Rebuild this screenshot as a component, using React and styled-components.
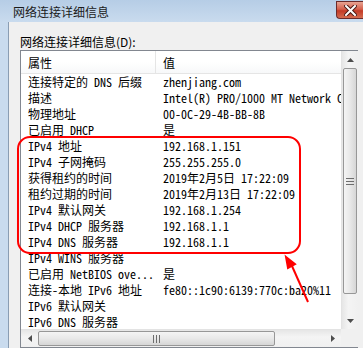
import React from "react";
import styled, { createGlobalStyle } from "styled-components";

const Global = createGlobalStyle`
  html, body {
    margin: 0;
    padding: 0;
    background: #f0f0f0;
  }
`;

const mono = `"Noto Sans Mono CJK SC", "Noto Sans CJK SC", "Liberation Mono", monospace`;

const Window = styled.div`
  position: relative;
  width: 363px;
  height: 348px;
  overflow: hidden;
  display: flex;
  flex-direction: column;
  background: #f0f0f0;
  font-family: ${mono};
  font-size: 12px;
  color: #000;
`;

const TitleBar = styled.div`
  height: 22px;
  flex: none;
  display: flex;
  align-items: flex-start;
  justify-content: space-between;
  background: linear-gradient(to bottom, #b6cde6, #c9dbee);
`;

const Title = styled.div`
  padding: 4px 0 0 13px;
  font-family: "Noto Sans CJK SC", sans-serif;
  font-size: 12px;
  line-height: 16px;
  color: #1b1b1b;
`;

const CloseButton = styled.div`
  width: 27px;
  height: 18px;
  margin-top: 1px;
  box-sizing: border-box;
  border: 1px solid #6b2b2b;
  border-right: none;
  border-radius: 0 0 0 4px;
  background: linear-gradient(to bottom, #e8a493 0%, #d5604c 45%, #c33a26 55%, #d46c50 100%);
  display: flex;
  align-items: center;
  justify-content: center;
`;

const Frame = styled.div`
  flex: 1;
  display: flex;
  min-height: 0;
`;

const SideFrame = styled.div`
  width: 8px;
  flex: none;
  background: #c9dbee;
  border-right: 1px solid #8a9db3;
`;

const Body = styled.div`
  flex: 1;
  padding: 12px 5px 0 11px;
  display: flex;
  flex-direction: column;
  min-width: 0;
`;

const Label = styled.div`
  height: 16px;
  line-height: 16px;
  font-family: "Noto Sans CJK SC", sans-serif;
  margin-bottom: 0;
`;

const ListBox = styled.div`
  margin-top: 0;
  width: 338px;
  height: 298px;
  box-sizing: border-box;
  border: 1px solid #828790;
  background: #fff;
  display: grid;
  grid-template-columns: 320px 17px;
  grid-template-rows: 1fr 18px;
`;

const Content = styled.div`
  overflow: hidden;
  position: relative;
`;

const HeaderRow = styled.div`
  display: flex;
  height: 23px;
  box-sizing: border-box;
  border-bottom: 1px solid #e5e5e5;
  background: linear-gradient(to bottom, #ffffff 50%, #f7f8f9);
`;

const HeaderCell = styled.div`
  width: ${(p) => p.$w}px;
  flex: none;
  box-sizing: border-box;
  padding-left: ${(p) => p.$pad}px;
  line-height: 23px;
  font-family: "Noto Sans CJK SC", sans-serif;
  border-right: ${(p) => (p.$divider ? "1px solid #e5e5e5" : "none")};
`;

const Row = styled.div`
  display: flex;
  height: 16px;
  line-height: 16px;
  white-space: nowrap;
`;

const Cell = styled.div`
  width: ${(p) => p.$w}px;
  flex: none;
  box-sizing: border-box;
  padding-left: ${(p) => p.$pad}px;
  overflow: ${(p) => (p.$clip ? "hidden" : "visible")};
`;

const VScroll = styled.div`
  display: flex;
  flex-direction: column;
  background: linear-gradient(to right, #e6e6e6, #f4f4f4 40%, #f0f0f0);
  border-left: 1px solid #e3e3e3;
`;

const HScroll = styled.div`
  display: flex;
  align-items: stretch;
  background: linear-gradient(to bottom, #e6e6e6, #f4f4f4 40%, #f0f0f0);
  border-top: 1px solid #e3e3e3;
`;

const ArrowBtn = styled.div`
  flex: none;
  width: ${(p) => (p.$horiz ? "17px" : "auto")};
  height: ${(p) => (p.$horiz ? "auto" : "17px")};
  display: flex;
  align-items: center;
  justify-content: center;
`;

const Thumb = styled.div`
  box-sizing: border-box;
  border: 1px solid #979797;
  border-radius: 2px;
  display: flex;
  align-items: center;
  justify-content: center;
  background: ${(p) =>
    p.$horiz
      ? "linear-gradient(to bottom, #f4f4f4, #e8e8e8 50%, #d6d6d6)"
      : "linear-gradient(to right, #f4f4f4, #e8e8e8 50%, #d6d6d6)"};
  margin: ${(p) => (p.$horiz ? "1px 0" : "0 1px")};
  ${(p) => (p.$horiz ? `width: ${p.$len}px;` : `height: ${p.$len}px;`)}
`;

const Spacer = styled.div`
  flex: 1;
`;

const Corner = styled.div`
  background: #f0f0f0;
`;

const Overlay = styled.svg`
  position: absolute;
  left: 0;
  top: 0;
  pointer-events: none;
`;

const rows = [
  ["连接特定的 DNS 后缀", "zhenjiang.com"],
  ["描述", "Intel(R) PRO/1000 MT Network Connection"],
  ["物理地址", "00-0C-29-4B-BB-8B"],
  ["已启用 DHCP", "是"],
  ["IPv4 地址", "192.168.1.151"],
  ["IPv4 子网掩码", "255.255.255.0"],
  ["获得租约的时间", "2019年2月5日 17:22:09"],
  ["租约过期的时间", "2019年2月13日 17:22:09"],
  ["IPv4 默认网关", "192.168.1.254"],
  ["IPv4 DHCP 服务器", "192.168.1.1"],
  ["IPv4 DNS 服务器", "192.168.1.1"],
  ["IPv4 WINS 服务器", ""],
  ["已启用 NetBIOS ove...", "是"],
  ["连接-本地 IPv6 地址", "fe80::1c90:6139:770c:ba20%11"],
  ["IPv6 默认网关", ""],
  ["IPv6 DNS 服务器", ""],
];

const Tri = ({ dir }) => {
  const pts = {
    up: "0,4 7,4 3.5,0",
    down: "0,0 7,0 3.5,4",
    left: "4,0 4,7 0,3.5",
    right: "0,0 0,7 4,3.5",
  }[dir];
  const w = dir === "up" || dir === "down" ? 7 : 4;
  const h = dir === "up" || dir === "down" ? 4 : 7;
  return (
    <svg width={w} height={h} viewBox={`0 0 ${w} ${h}`}>
      <polygon points={pts} fill="#4d4d4d" />
    </svg>
  );
};

const Grip = ({ horiz }) =>
  horiz ? (
    <svg width="7" height="8" viewBox="0 0 7 8">
      <rect x="0" y="0" width="1" height="8" fill="#6d6d6d" />
      <rect x="3" y="0" width="1" height="8" fill="#6d6d6d" />
      <rect x="6" y="0" width="1" height="8" fill="#6d6d6d" />
    </svg>
  ) : (
    <svg width="8" height="7" viewBox="0 0 8 7">
      <rect x="0" y="0" width="8" height="1" fill="#6d6d6d" />
      <rect x="0" y="3" width="8" height="1" fill="#6d6d6d" />
      <rect x="0" y="6" width="8" height="1" fill="#6d6d6d" />
    </svg>
  );

export default function App() {
  return (
    <Window>
      <Global />
      <TitleBar>
        <Title>网络连接详细信息</Title>
        <CloseButton>
          <svg width="13" height="11" viewBox="0 0 13 11">
            <path
              d="M2 1 L11 10 M11 1 L2 10"
              stroke="#4a1a14"
              strokeWidth="4"
              strokeLinecap="square"
            />
            <path
              d="M2 1 L11 10 M11 1 L2 10"
              stroke="#ffffff"
              strokeWidth="2"
              strokeLinecap="square"
            />
          </svg>
        </CloseButton>
      </TitleBar>
      <Frame>
        <SideFrame />
        <Body>
          <Label>网络连接详细信息(D):</Label>
          <ListBox>
            <Content>
              <HeaderRow>
                <HeaderCell $w={135} $pad={7} $divider>
                  属性
                </HeaderCell>
                <HeaderCell $w={200} $pad={7}>
                  值
                </HeaderCell>
              </HeaderRow>
              {rows.map(([k, v]) => (
                <Row key={k}>
                  <Cell $w={135} $pad={7} $clip>
                    {k}
                  </Cell>
                  <Cell $w={300} $pad={7}>
                    {v}
                  </Cell>
                </Row>
              ))}
            </Content>
            <VScroll>
              <ArrowBtn>
                <Tri dir="up" />
              </ArrowBtn>
              <Thumb $len={226}>
                <Grip />
              </Thumb>
              <Spacer />
              <ArrowBtn>
                <Tri dir="down" />
              </ArrowBtn>
            </VScroll>
            <HScroll>
              <ArrowBtn $horiz>
                <Tri dir="left" />
              </ArrowBtn>
              <Thumb $horiz $len={237}>
                <Grip horiz />
              </Thumb>
              <Spacer />
              <ArrowBtn $horiz>
                <Tri dir="right" />
              </ArrowBtn>
            </HScroll>
            <Corner />
          </ListBox>
        </Body>
      </Frame>
      <Overlay width="363" height="348" viewBox="0 0 363 348">
        <rect
          x="18"
          y="137"
          width="282"
          height="116"
          rx="12"
          ry="12"
          fill="none"
          stroke="#ff0000"
          strokeWidth="2"
        />
        <line x1="308" y1="302" x2="292" y2="266" stroke="#ff0000" strokeWidth="2" />
        <polygon points="286,257 295,264 288,268" fill="#ff0000" stroke="#ff0000" strokeWidth="2" />
      </Overlay>
    </Window>
  );
}
